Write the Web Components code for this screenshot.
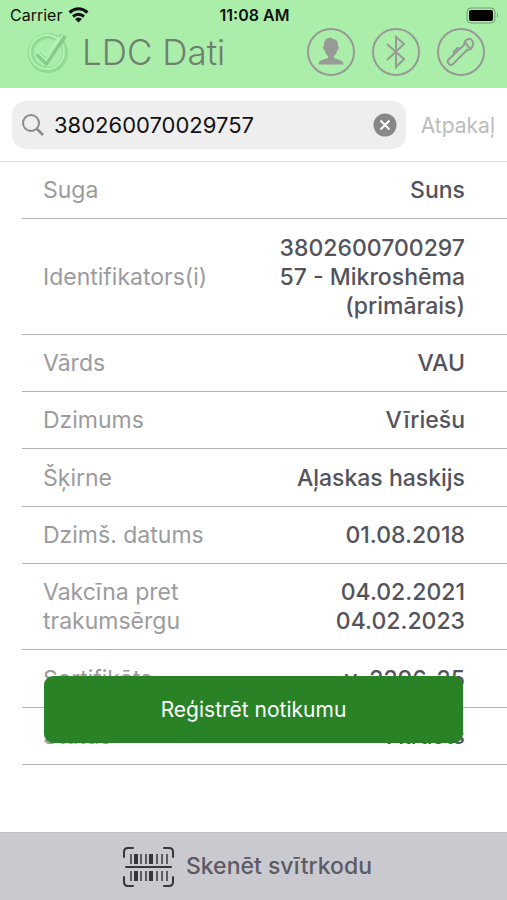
<!DOCTYPE html>
<html lang="lv">
<head>
<meta charset="utf-8">
<meta name="viewport" content="width=device-width, initial-scale=1">
<title>LDC Dati</title>
<style>
  html, body { height: 100%; margin: 0; }
  body {
    display: flex;
    flex-direction: column;
    background: #fff;
    color: #53535d;
    font: 23px/29px Inter, "Liberation Sans", sans-serif;
  }
</style>
</head>
<body>
<status-bar carrier="Carrier" time="11:08 AM"></status-bar>
<app-header>
  LDC Dati
  <round-button slot="actions" label="Profils">
    <svg viewBox="2 2 44 44" fill="#979a97"><path d="M24 9.500l2 1.500c4 0 5.500 3 5 7 1 0 1 1 .5 3l-1.500 2c-.5 3-2 4-3 5v2l7 2.500c2 1 2.500 2 2.500 4h-25c0-2 .5-3 2.500-4l7-2.500v-2c-1-1-2.500-2-3-5l-1.500-2c-.5-2-.5-3 .5-3-.5-5 2-8 7-8.500z"/></svg>
  </round-button>
  <round-button slot="actions" label="Bluetooth">
    <svg viewBox="2 2 44 44" fill="none" stroke="#979a97" stroke-width="2"><path d="M15 16l17 15-8 8V9l8 7-17 16"/></svg>
  </round-button>
  <round-button slot="actions" label="Lukturis">
    <svg viewBox="2 2 44 44" fill="none" stroke="#979a97" stroke-width="2" stroke-linejoin="round"><path d="M27 17l1-4 3-2q2-1 4 1.500t1 4.500l-2 4-4 1L16 36q-2 2-4 0t-1-4zM28 13q1 4 6 8M17 26l-.5-2 4-4 2.500 1"/></svg>
  </round-button>
</app-header>
<search-bar value="380260070029757" cancel="Atpakaļ"></search-bar>
<main-panel>
  <record-table></record-table>
  <primary-button slot="action">Reģistrēt notikumu</primary-button>
</main-panel>
<scan-button>Skenēt svītrkodu</scan-button>

<script>
class StatusBar extends HTMLElement {
  constructor() {
    super();
    this.attachShadow({ mode: 'open' });
  }

  connectedCallback() {
    this.shadowRoot.innerHTML = `
      <style>
        :host {
          display: grid;
          grid-template-columns: 1fr auto 1fr;
          align-items: center;
          padding: 4px 8px 2px 10px;
          background: #aaeeaa;
          color: #111;
          font-size: 16px;
          line-height: 22px;
        }
        .left { display: flex; align-items: center; gap: 6px; }
        time { font-weight: 600; }
        .battery { justify-self: end; }
        svg { display: block; }
      </style>
      <span class="left">${this.getAttribute('carrier')}
        <svg width="21" height="16" viewBox="0 0 21 16" fill="none" stroke="#111" stroke-width="3">
          <path d="M1.500 5.500Q10.500-2 19.500 5.500M5 9.500q5.500-4.500 11 0"/>
          <path d="M7 12q3.500-3 7 0l-3.500 3.500z" fill="#111" stroke="none"/>
        </svg>
      </span>
      <time>${this.getAttribute('time')}</time>
      <svg class="battery" width="33" height="17" viewBox="0 0 33 17">
        <rect x="1" y="1" width="28" height="15" rx="4" fill="none" stroke="#6f9d6f"/>
        <rect x="3" y="3" width="24" height="11" rx="2" fill="#000"/>
        <path d="M31 6q2 2.500 0 5z" fill="#6f9d6f"/>
      </svg>
    `;
  }
}

class AppHeader extends HTMLElement {
  constructor() {
    super();
    this.attachShadow({ mode: 'open' });
  }

  connectedCallback() {
    this.shadowRoot.innerHTML = `
      <style>
        :host {
          display: flex;
          align-items: center;
          padding: 0 22px 12px 26px;
          background: #aaeeaa;
        }
        .logo { flex: none; margin-right: 12px; }
        h1 {
          flex: 1;
          margin: 0;
          color: #6f7f6f;
          font-size: 35px;
          font-weight: 300;
          line-height: 48px;
          white-space: nowrap;
        }
        .actions { display: flex; gap: 17px; }
      </style>
      <svg class="logo" width="44" height="44" viewBox="0 0 44 44" fill="none">
        <circle cx="22" cy="23" r="17" stroke="#93da94" stroke-width="6"/>
        <circle cx="21" cy="22" r="17" stroke="#b2f3b1" stroke-width="2"/>
        <path d="M12 23l8 8L38 5" stroke="#84cb86" stroke-width="7"/>
        <path d="M11 21l9 9L37 4M14 20l6 6L33 7" stroke="#b5f5b4" stroke-width="2"/>
      </svg>
      <h1><slot></slot></h1>
      <div class="actions"><slot name="actions"></slot></div>
    `;
  }
}

class RoundButton extends HTMLElement {
  constructor() {
    super();
    this.attachShadow({ mode: 'open' });
  }

  connectedCallback() {
    this.shadowRoot.innerHTML = `
      <style>
        :host { display: block; }
        button {
          display: block;
          box-sizing: border-box;
          width: 48px;
          height: 48px;
          padding: 0;
          border: 2px solid #979a97;
          border-radius: 50%;
          background: none;
        }
        ::slotted(svg) { display: block; width: 44px; height: 44px; }
      </style>
      <button type="button" aria-label="${this.getAttribute('label')}"><slot></slot></button>
    `;
  }
}

class SearchBar extends HTMLElement {
  constructor() {
    super();
    this.attachShadow({ mode: 'open' });
  }

  connectedCallback() {
    this.shadowRoot.innerHTML = `
      <style>
        :host {
          display: flex;
          align-items: center;
          gap: 15px;
          padding: 13px 12px 12px;
          border-bottom: 1px solid #e2e2e2;
        }
        .field {
          flex: 1;
          min-width: 0;
          display: flex;
          align-items: center;
          gap: 10px;
          padding: 0 9px 0 10px;
          border-radius: 14px;
          background: #eeeeef;
        }
        input {
          flex: 1;
          min-width: 0;
          height: 48px;
          padding: 0;
          border: 0;
          outline: 0;
          background: none;
          color: #111;
          font: inherit;
          font-size: 22px;
        }
        button { padding: 0; border: 0; background: none; font: inherit; }
        .cancel { color: #bcbcbc; font-size: 21px; }
        svg { display: block; flex: none; }
      </style>
      <label class="field">
        <svg width="22" height="22" viewBox="0 0 22 22" fill="none" stroke="#8b8b8e" stroke-width="2">
          <circle cx="9" cy="9" r="8"/><path d="M15 15l6 6" stroke-width="2.500"/>
        </svg>
        <input type="text" aria-label="Meklēt" value="${this.getAttribute('value')}">
        <button type="button" class="clear" aria-label="Notīrīt">
          <svg width="24" height="24" viewBox="0 0 24 24">
            <circle cx="12" cy="12" r="11.500" fill="#88888a"/>
            <path d="M7.500 7.500l9 9m0-9l-9 9" stroke="#fff" stroke-width="2"/>
          </svg>
        </button>
      </label>
      <button type="button" class="cancel">${this.getAttribute('cancel')}</button>
    `;
    this.shadowRoot.querySelector('.clear').addEventListener('click', () => {
      this.shadowRoot.querySelector('input').value = '';
    });
  }
}

class MainPanel extends HTMLElement {
  constructor() {
    super();
    this.attachShadow({ mode: 'open' });
  }

  connectedCallback() {
    this.shadowRoot.innerHTML = `
      <style>
        :host { flex: 1; display: grid; position: relative; }
        main { display: grid; padding-bottom: 67px; }
        /* floats over the last rows of the list */
        .action { position: absolute; left: 44px; right: 44px; bottom: 89px; }
      </style>
      <main><slot></slot></main>
      <div class="action"><slot name="action"></slot></div>
    `;
  }
}

class RecordTable extends HTMLElement {
  constructor() {
    super();
    this.attachShadow({ mode: 'open' });
    this.rows = [
      ['Suga', 'Suns'],
      ['Identifikators(i)', '380260070029757 - Mikroshēma (primārais)'],
      ['Vārds', 'VAU'],
      ['Dzimums', 'Vīriešu'],
      ['Šķirne', 'Aļaskas haskijs'],
      ['Dzimš. datums', '01.08.2018'],
      ['Vakcīna pret trakumsērgu', '04.02.2021 04.02.2023'],
      ['Sertifikāts', 'v. 2296-25'],
      ['Status', 'Atrasts']
    ];
  }

  connectedCallback() {
    const rows = this.rows.map(([label, value]) => `
      <tr><th scope="row">${label}</th><td>${value}</td></tr>
    `).join('');

    this.shadowRoot.innerHTML = `
      <style>
        :host { display: grid; margin-left: 22px; }
        table { width: 100%; height: 100%; border-spacing: 0; table-layout: fixed; }
        th, td {
          padding: 14px 0 13px;
          border-bottom: 1px solid #b4b4b6;
          vertical-align: middle;
        }
        th {
          width: 52%;
          box-sizing: border-box;
          padding-left: 21px;
          padding-right: 60px;
          color: #9b9b9e;
          font-weight: 400;
          text-align: left;
        }
        td {
          padding-right: 42px;
          font-weight: 500;
          text-align: right;
          overflow-wrap: anywhere;
        }
      </style>
      <table><tbody>${rows}</tbody></table>
    `;
  }
}

class PrimaryButton extends HTMLElement {
  constructor() {
    super();
    this.attachShadow({ mode: 'open' });
  }

  connectedCallback() {
    this.shadowRoot.innerHTML = `
      <style>
        :host { display: block; }
        button {
          display: block;
          width: 100%;
          padding: 19px;
          border: 0;
          border-radius: 9px;
          background: #2a8226;
          color: #fff;
          font: inherit;
          font-size: 21px;
        }
      </style>
      <button type="button"><slot></slot></button>
    `;
  }
}

class ScanButton extends HTMLElement {
  constructor() {
    super();
    this.attachShadow({ mode: 'open' });
  }

  connectedCallback() {
    this.shadowRoot.innerHTML = `
      <style>
        :host { display: block; }
        button {
          display: flex;
          align-items: center;
          justify-content: center;
          gap: 12px;
          width: 100%;
          height: 68px;
          padding: 0 12px 0 0;
          border: 0;
          border-top: 1px solid #c2c2c6;
          background: #cac9cf;
          color: #5b5b66;
          font: inherit;
          font-weight: 500;
        }
      </style>
      <button type="button">
        <svg width="51" height="40" viewBox="0 0 51 40" fill="none" stroke="#37373b" stroke-width="2">
          <path d="M1 10V5q0-4 4-4h5M41 1h5q4 0 4 4v5M50 30v5q0 4-4 4h-5M10 39H5q-4 0-4-4v-5M3 20h45" stroke-linecap="round"/>
          <path d="M8 7v10M18 7v10M23 7v10M34 7v10M39 7v10M44 7v10M8 24v10M18 24v10M23 24v10M34 24v10M39 24v10M44 24v10" stroke-width="1.500"/>
          <path d="M13 7v10M28 7v10M13 24v10M28 24v10" stroke-width="4"/>
        </svg>
        <slot></slot>
      </button>
    `;
  }
}

customElements.define('status-bar', StatusBar);
customElements.define('app-header', AppHeader);
customElements.define('round-button', RoundButton);
customElements.define('search-bar', SearchBar);
customElements.define('main-panel', MainPanel);
customElements.define('record-table', RecordTable);
customElements.define('primary-button', PrimaryButton);
customElements.define('scan-button', ScanButton);
</script>
</body>
</html>
